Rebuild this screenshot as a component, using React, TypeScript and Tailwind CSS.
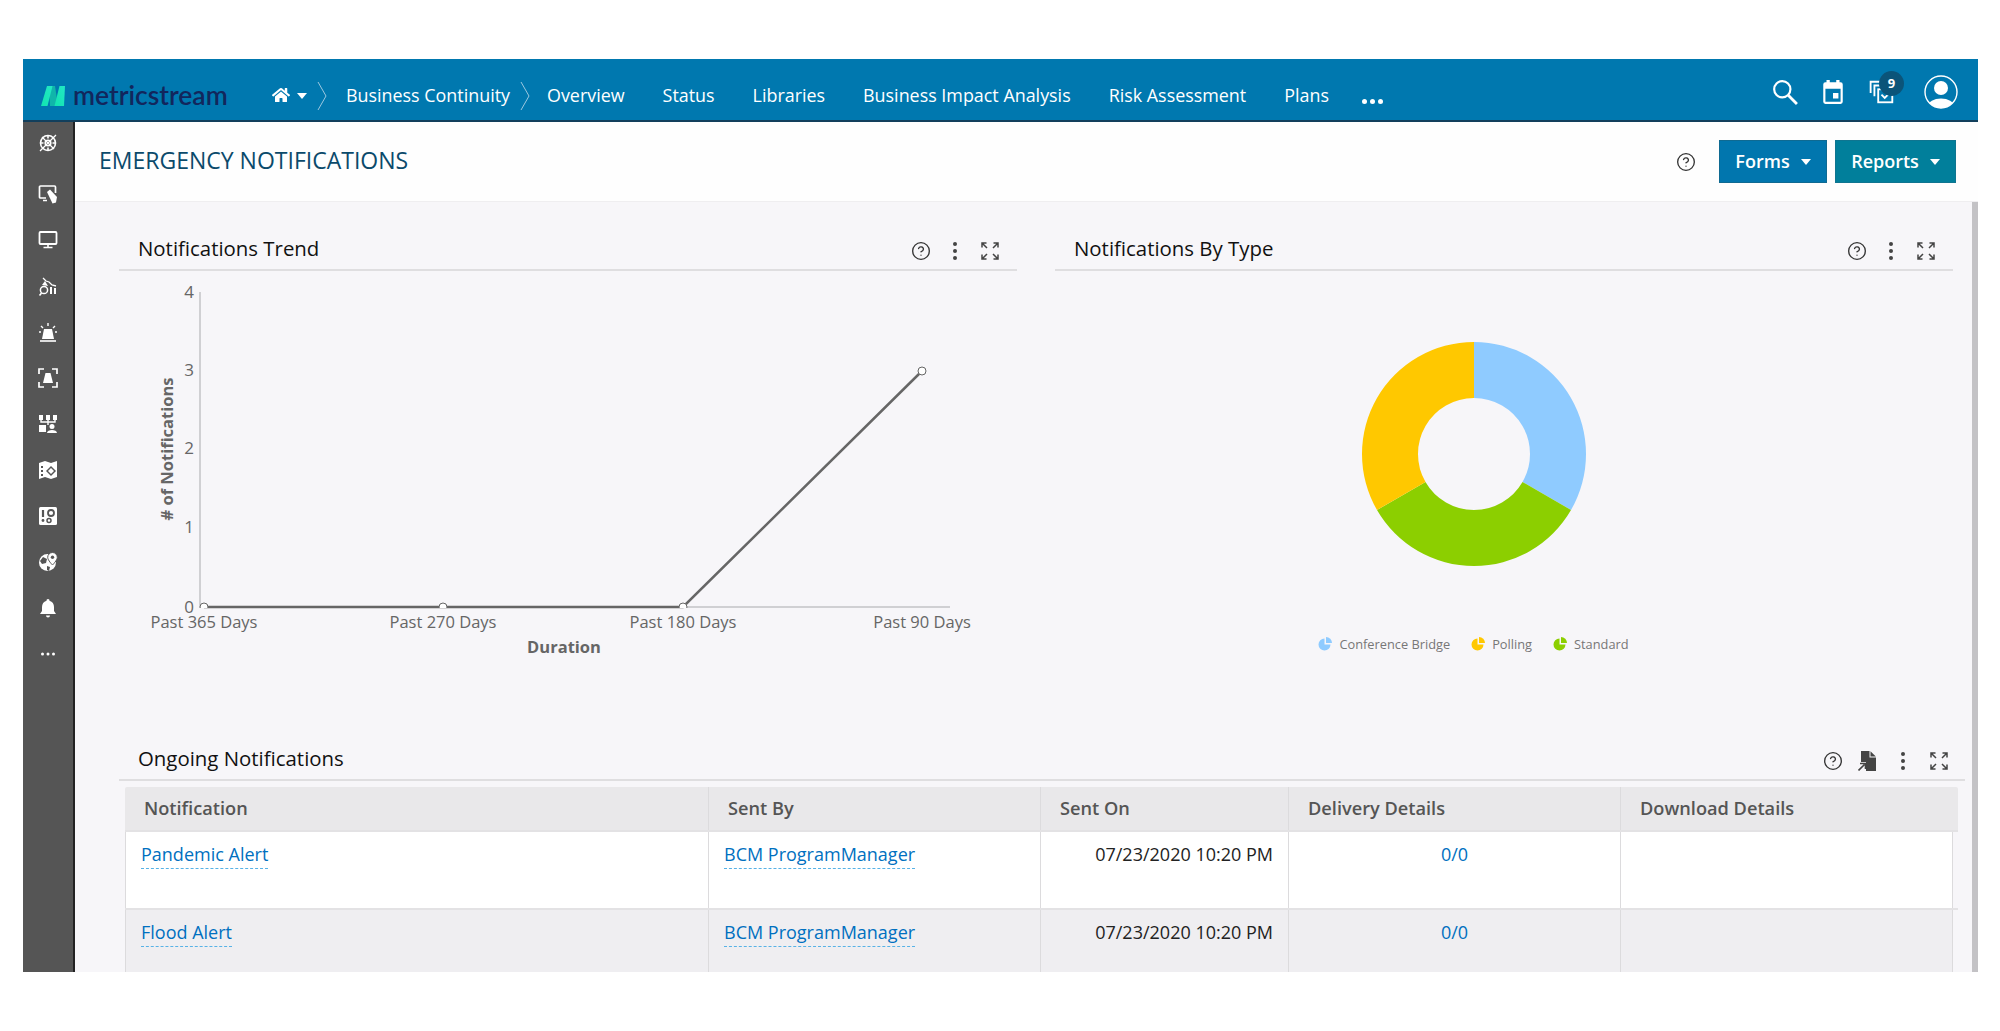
import { FaHome } from "react-icons/fa";
import { CircleHelp } from "lucide-react";

const W = "#ffffff";

function Caret({ className }: { className: string }) {
  return (
    <svg viewBox="0 0 10 6" className={className} fill="currentColor">
      <path d="M0 0h10L5 6z" />
    </svg>
  );
}

function Crumb() {
  return (
    <svg viewBox="0 0 10 30" className="w-[10px] h-[30px] shrink-0" fill="none" stroke="#9cc8e0" strokeWidth="1">
      <path d="M1 1l8 14-8 14" />
    </svg>
  );
}

function Logo() {
  return (
    <div className="flex items-center w-[204px] shrink-0">
      <svg viewBox="0 0 24 20" className="w-[24px] h-[20px] mr-[8px]">
        <defs>
          <linearGradient id="lg" x1="0" y1="1" x2="1" y2="0">
            <stop offset="0" stopColor="#12e3b0" />
            <stop offset="1" stopColor="#22e8c4" />
          </linearGradient>
        </defs>
        <path d="M8 0H14L17 20H9z" fill="#10b5aa" />
        <path d="M0 20L6 0H11.500L6.500 20z" fill="url(#lg)" />
        <path d="M13.500 20L18.500 0H24L23 20z" fill="url(#lg)" />
      </svg>
      <span className="font-['Lato',sans-serif] text-[26.500px] leading-none font-semibold text-[#12265c] -mt-[1px]">metricstream</span>
    </div>
  );
}

const navItems = ["Overview", "Status", "Libraries", "Business Impact Analysis", "Risk Assessment", "Plans"];

function TopBar() {
  return (
    <header className="h-[63px] shrink-0 bg-[#0078af] border-b-2 border-[#123f5c] flex items-center pl-[18px] pr-[20px] pt-[12px]">
      <Logo />
      <div className="ml-[27px] flex items-center text-white">
        <FaHome className="w-[18px] h-[18px] -mt-[2px]" />
        <Caret className="w-[10px] h-[6px] ml-[7px] text-white" />
        <span className="ml-[10px]"><Crumb /></span>
        <span className="ml-[19px] text-[17.900px] leading-none">Business Continuity</span>
        <span className="ml-[10px]"><Crumb /></span>
        <div className="ml-[17px] flex items-center gap-[38px] text-[17.900px] leading-none">
          {navItems.map((n) => (
            <span key={n}>{n}</span>
          ))}
          <span className="flex gap-[3px] mt-[12px] -ml-[5px]">
            <i className="w-[5px] h-[5px] rounded-full bg-white" />
            <i className="w-[5px] h-[5px] rounded-full bg-white" />
            <i className="w-[5px] h-[5px] rounded-full bg-white" />
          </span>
        </div>
      </div>
      <div className="ml-auto flex items-center -mt-[7px]">
        <svg viewBox="0 0 24 24" className="w-[26px] h-[26px] mr-[1px]" fill="none" stroke={W} strokeWidth="2">
          <circle cx="9.500" cy="9.500" r="7.500" />
          <path d="M15 15l8 8" strokeWidth="2.600" />
        </svg>
        <svg viewBox="0 0 24 24" className="w-[26px] h-[26px] ml-[21px]" fill={W}>
          <path d="M19 3h-1V1h-3v2H9V1H6v2H5a2 2 0 00-2 2v16a2 2 0 002 2h14a2 2 0 002-2V5a2 2 0 00-2-2zm0 18H5V9h14v12zm-7-8h5v5h-5z" />
        </svg>
        <div className="relative w-[26px] h-[26px] ml-[23px]">
          <svg viewBox="0 0 24 24" className="w-[26px] h-[26px]" fill="none" stroke={W} strokeWidth="1.700">
            <path d="M1.500 13V2.500H12" />
            <path d="M5 16V6h11" />
            <rect x="8.500" y="9.500" width="13" height="12" fill="#0078af" />
            <path d="M11.500 14.500l3 3 4-4" />
          </svg>
          <span className="absolute -top-[8px] left-[10px] w-[25px] h-[25px] rounded-full bg-[#0b5479] text-white text-[13px] font-bold flex items-center justify-center">9</span>
        </div>
        <svg viewBox="0 0 34 34" className="w-[34px] h-[34px] ml-[29px]">
          <defs>
            <clipPath id="av"><circle cx="17" cy="17" r="16" /></clipPath>
          </defs>
          <circle cx="17" cy="17" r="16" fill="none" stroke={W} strokeWidth="1.400" />
          <circle cx="17" cy="13" r="7" fill={W} />
          <ellipse cx="17" cy="31" rx="13" ry="7.500" fill={W} clipPath="url(#av)" />
        </svg>
      </div>
    </header>
  );
}

const ic = "w-[20px] h-[20px]";
const sideIcons = [
  <svg viewBox="0 0 20 20" className={ic} fill="none" stroke={W} strokeWidth="1.600" key="1">
    <circle cx="10" cy="10" r="7.500" />
    <circle cx="10" cy="10" r="2.800" />
    <path d="M10 2.500v3M10 14.500v3M2.500 10h3M14.500 10h3" />
    <path d="M2 18L18 2M4 4l12 12" strokeWidth="1.300" />
  </svg>,
  <svg viewBox="0 0 20 20" className={ic} key="2">
    <path d="M8 14H2.500a1 1 0 01-1-1V3a1 1 0 011-1h14a1 1 0 011 1v6" fill="none" stroke={W} strokeWidth="1.700" />
    <path d="M5 16.500h4" stroke={W} strokeWidth="1.500" />
    <path d="M9 8l3-2.500 7 7.500-1 5.500-3.500 1z" fill={W} />
  </svg>,
  <svg viewBox="0 0 20 20" className={ic} fill="none" stroke={W} key="3">
    <rect x="1.500" y="2" width="17" height="12" rx="1" strokeWidth="1.800" />
    <path d="M10 14v3M5.500 17.500h9" strokeWidth="1.600" />
  </svg>,
  <svg viewBox="0 0 20 20" className={ic} key="4">
    <circle cx="6" cy="14" r="3.600" fill="none" stroke={W} strokeWidth="1.500" />
    <path d="M1.500 19.500l2-2.500" stroke={W} strokeWidth="1.600" />
    <path d="M5 2l3 3 3 1 3 3 4 1" fill="none" stroke={W} strokeWidth="1.300" />
    <path d="M4 9l3-4 3 5zM12 11h2v7h-2zM16 12h2v6h-2z" fill={W} />
  </svg>,
  <svg viewBox="0 0 20 20" className={ic} key="5">
    <path d="M6 7h8l2 10H4z" fill={W} />
    <path d="M2 19h16" stroke={W} strokeWidth="1.600" />
    <path d="M10 1v3M3 4l2 2M17 4l-2 2M1 10h2M17 10h2" stroke={W} strokeWidth="1.400" />
  </svg>,
  <svg viewBox="0 0 20 20" className={ic} key="6">
    <path d="M1 6V1h5M14 1h5v5M19 14v5h-5M6 19H1v-5" fill="none" stroke={W} strokeWidth="1.700" />
    <path d="M7.500 5h5l2.500 10H5z" fill={W} />
  </svg>,
  <svg viewBox="0 0 20 20" className={ic} fill={W} key="7">
    <path d="M1 1h4v5H1zM8 1h4v5H8zM15 1h4v5h-4z" />
    <path d="M3 6v2h14V6M10 6v5" fill="none" stroke={W} strokeWidth="1.400" />
    <path d="M1 11h7v7H1z" />
    <circle cx="14" cy="12.500" r="2.500" />
    <path d="M9 19c0-4 10-4 10 0z" />
  </svg>,
  <svg viewBox="0 0 20 20" className={ic} key="8">
    <path d="M1 3l6-2 6 2 6-2v16l-6 2-6-2-6 2z" fill={W} />
    <path d="M13 6l5 5-5 5-5-5z" fill="#555555" />
    <path d="M13 8l3 3-3 3-3-3z" fill={W} />
    <path d="M3 6h2v2H3zM3 10h2v2H3zM3 14h2v2H3z" fill="#555555" />
  </svg>,
  <svg viewBox="0 0 20 20" className={ic} key="9">
    <rect x="1" y="1" width="18" height="18" rx="1.500" fill={W} />
    <path d="M5 4v7" stroke="#555555" strokeWidth="2.200" />
    <circle cx="5" cy="14.500" r="1.400" fill="#555555" />
    <circle cx="13" cy="7" r="3" fill="none" stroke="#555555" strokeWidth="1.800" />
    <circle cx="11" cy="14.500" r="2" fill="none" stroke="#555555" strokeWidth="1.500" />
  </svg>,
  <svg viewBox="0 0 20 20" className={ic} key="10">
    <circle cx="9.500" cy="10.500" r="8.500" fill={W} />
    <path d="M5 5l4 2-1 4-4 1-2-3zM9 14l3 1-1 4-2-1z" fill="#555555" />
    <path d="M14.500 0.500a4.800 4.800 0 014.800 4.800c0 3-4.800 7.700-4.800 7.700S9.700 8.300 9.700 5.300A4.800 4.800 0 0114.500 0.500z" fill={W} stroke="#555555" strokeWidth="1" />
    <circle cx="14.500" cy="5.300" r="1.700" fill="#555555" />
  </svg>,
  <svg viewBox="0 0 20 20" className={ic} fill={W} key="11">
    <path d="M10 1a1.500 1.500 0 011.500 1.700C14.500 3.500 16 6 16 9v4l2 3H2l2-3V9c0-3 1.500-5.500 4.500-6.300A1.500 1.500 0 0110 1z" />
    <path d="M8 17.500h4a2 2 0 01-4 0z" />
  </svg>,
  <svg viewBox="0 0 20 20" className={ic} fill={W} key="12">
    <circle cx="4.500" cy="10" r="1.500" />
    <circle cx="10" cy="10" r="1.500" />
    <circle cx="15.500" cy="10" r="1.500" />
  </svg>,
];

function Sidebar() {
  return (
    <aside className="w-[52px] shrink-0 bg-[#555555] border-r-2 border-[#222222] flex flex-col items-center">
      {sideIcons.map((s, i) => (
        <div key={i} className={i === 0 ? "h-[42px] w-full flex items-center justify-center mb-[7px]" : "h-[46px] w-full flex items-center justify-center"}>
          {s}
        </div>
      ))}
    </aside>
  );
}

function Help({ className }: { className?: string }) {
  return <CircleHelp className={className ?? "w-[20px] h-[20px]"} color="#333333" strokeWidth={1.600} />;
}

function Dots() {
  return (
    <svg viewBox="0 0 4 18" className="w-[4px] h-[18px]" fill="#444444">
      <circle cx="2" cy="2" r="2" />
      <circle cx="2" cy="9" r="2" />
      <circle cx="2" cy="16" r="2" />
    </svg>
  );
}

function Expand() {
  return (
    <svg viewBox="0 0 18 18" className="w-[18px] h-[18px]" fill="none" stroke="#444444" strokeWidth="1.500">
      <path d="M1 5.500V1h4.500M1 1l5 5M17 5.500V1h-4.500M17 1l-5 5M1 12.500V17h4.500M1 17l5-5M17 12.500V17h-4.500M17 17l-5-5" />
    </svg>
  );
}

function FileExport() {
  return (
    <svg viewBox="0 0 18 20" className="w-[18px] h-[20px]" fill="#444444">
      <path d="M3 0h8.500v6.500H18V20H7v-7.500H3z" />
      <path d="M12.500 0.300L17.800 5.500H12.500z" />
      <path d="M0 11h8v9H0z" fill="#f7f6f9" />
      <path d="M0.500 19.500l6-6M2 12.500h5.500v5.500" fill="none" stroke="#444444" strokeWidth="1.600" />
    </svg>
  );
}

function PanelHead({ title, extra }: { title: string; extra?: boolean }) {
  return (
    <div className="h-[44px] border-b-2 border-[#dfdee0] flex items-center pl-[19px]">
      <h2 className="text-[20.400px] leading-none font-normal text-[#111111]">{title}</h2>
      <div className="ml-auto flex items-center pt-[6px]">
        <Help />
        {extra && <span className="ml-[15px] flex"><FileExport /></span>}
        <span className={extra ? "ml-[25px] flex" : "ml-[22px] flex"}><Dots /></span>
        <span className={extra ? "ml-[25px] mr-[17px] flex" : "ml-[24px] mr-[18px] flex"}><Expand /></span>
      </div>
    </div>
  );
}

function TrendChart() {
  const ox = 119;
  const oy = 271;
  const X = (x: number) => x - ox;
  const Y = (y: number) => y - oy;
  const pts: [number, number][] = [[204, 607], [443, 607], [683, 607], [922, 371]];
  const xl = ["Past 365 Days", "Past 270 Days", "Past 180 Days", "Past 90 Days"];
  const yt: [string, number][] = [["4", 292], ["3", 370], ["2", 448], ["1", 527], ["0", 607]];
  return (
    <svg width="898" height="420" className="block">
      <defs>
        <clipPath id="plot"><rect x="0" y="0" width="898" height={Y(608)} /></clipPath>
      </defs>
      <path d={`M${X(200)} ${Y(292)}V${Y(607)}H${X(950)}`} fill="none" stroke="#c4c3c6" strokeWidth="1.500" />
      <g fontSize="17" fill="#666666" textAnchor="end">
        {yt.map(([t, y]) => (
          <text key={t} x={X(194)} y={Y(y) + 6}>{t}</text>
        ))}
      </g>
      <polyline points={pts.map(([x, y]) => `${X(x)},${Y(y)}`).join(" ")} fill="none" stroke="#666666" strokeWidth="2.500" />
      <g clipPath="url(#plot)" fill="#ffffff" stroke="#666666" strokeWidth="1">
        {pts.map(([x, y]) => (
          <circle key={x} cx={X(x)} cy={Y(y)} r="4" />
        ))}
      </g>
      <g fontSize="16.500" fill="#666666" textAnchor="middle">
        {pts.map(([x], i) => (
          <text key={x} x={X(x)} y={Y(628)}>{xl[i]}</text>
        ))}
      </g>
      <text x={X(564)} y={Y(653)} fontSize="16.500" fontWeight="700" fill="#666666" textAnchor="middle">Duration</text>
      <text transform={`translate(${X(173)} ${Y(449)}) rotate(-90)`} fontSize="16.500" fontWeight="700" fill="#666666" textAnchor="middle">
        # of Notifications
      </text>
    </svg>
  );
}

function LegendPie({ color }: { color: string }) {
  return (
    <svg viewBox="0 0 14 14" className="w-[14px] h-[14px]" fill={color}>
      <path d="M6.500 1.500A6 6 0 1012.500 7.500H6.500z" />
      <path d="M8 0A6 6 0 0114 6H8z" />
    </svg>
  );
}

function Donut() {
  return (
    <div className="flex flex-col items-center pr-[61px]">
      <svg viewBox="0 0 226 226" className="w-[226px] h-[226px] mt-[70px]">
        <path d="M113 1A112 112 0 0 1 210 169L161.500 141A56 56 0 0 0 113 57Z" fill="#8fcbff" />
        <path d="M210 169A112 112 0 0 1 16 169L64.500 141A56 56 0 0 0 161.500 141Z" fill="#8ccf00" />
        <path d="M16 169A112 112 0 0 1 113 1L113 57A56 56 0 0 0 64.500 141Z" fill="#ffc800" />
      </svg>
      <div className="mt-[70px] flex items-center text-[12.800px] leading-none text-[#777777]">
        <LegendPie color="#8fcbff" />
        <span className="ml-[7px]">Conference Bridge</span>
        <span className="ml-[21px]"><LegendPie color="#ffc800" /></span>
        <span className="ml-[7px]">Polling</span>
        <span className="ml-[21px]"><LegendPie color="#8ccf00" /></span>
        <span className="ml-[7px]">Standard</span>
      </div>
    </div>
  );
}

function LinkText({ children }: { children: string }) {
  return <a className="text-[#0070c0] border-b border-dashed border-[#58b2e6] pb-[2px]">{children}</a>;
}

const headers = ["Notification", "Sent By", "Sent On", "Delivery Details", "Download Details"];
const rows = ["Pandemic Alert", "Flood Alert"];

function NotificationsTable() {
  const grid = "grid grid-cols-[583px_332px_248px_332px_338px]";
  return (
    <div className="ml-[6px] mr-[7px] mt-[6px] text-[18px]">
      <div className={`${grid} h-[43px] bg-[#e9e8ea] rounded-t-[2px] text-[18.200px]`}>
        {headers.map((h, i) => (
          <div key={h} className={i === 0 ? "pl-[19px] flex items-center font-semibold text-[#555555]" : "pl-[19px] flex items-center font-semibold text-[#555555] border-l border-[#dcdbdd]"}>
            {h}
          </div>
        ))}
      </div>
      {rows.map((r, i) => {
        const bg = i === 0 ? "bg-white" : "bg-[#efeef1]";
        return (
          <div key={r} className={`${grid} h-[78px] border-t-2 border-[#e3e2e4] first-of-type:border-t-0`}>
            <div className={`${bg} border-l border-[#dcdbdd] pl-[15px] pt-[9px]`}><LinkText>{r}</LinkText></div>
            <div className={`${bg} border-l border-[#dcdbdd] pl-[15px] pt-[9px]`}><LinkText>BCM ProgramManager</LinkText></div>
            <div className={`${bg} border-l border-[#dcdbdd] pr-[15px] pt-[9px] text-right text-[#222222]`}>07/23/2020 10:20 PM</div>
            <div className={`${bg} border-l border-[#dcdbdd] pt-[9px] text-center text-[#0070c0]`}>0/0</div>
            <div className={`${bg} border-l border-r border-[#dcdbdd] mr-[5px]`} />
          </div>
        );
      })}
    </div>
  );
}

export default function App() {
  return (
    <div className="h-[1031px] w-[2000px] bg-white pt-[59px] overflow-hidden font-['Open_Sans','Noto_Sans',sans-serif]">
      <div className="ml-[23px] w-[1955px] h-[913px] flex flex-col overflow-hidden">
        <TopBar />
        <div className="flex-1 min-h-0 flex">
          <Sidebar />
          <main className="flex-1 min-w-0 flex flex-col">
            <div className="h-[80px] shrink-0 bg-[#fefefe] border-b border-[#efeef0] flex items-center pl-[24px] pr-[22px]">
              <h1 className="text-[23px] leading-none font-normal text-[#0b4a6b] -mt-[2px]">EMERGENCY NOTIFICATIONS</h1>
              <div className="ml-auto flex items-center">
                <Help />
                <button className="ml-[23px] w-[108px] h-[43px] bg-[#0176ae] border border-[#0f6a92] text-white text-[18px] font-semibold flex items-center justify-center">
                  Forms<Caret className="w-[10px] h-[6px] ml-[11px]" />
                </button>
                <button className="ml-[8px] w-[121px] h-[43px] bg-[#017f9b] border border-[#0f7590] text-white text-[18px] font-semibold flex items-center justify-center">
                  Reports<Caret className="w-[10px] h-[6px] ml-[11px]" />
                </button>
              </div>
            </div>
            <div className="flex-1 min-h-0 flex bg-[#f7f6f9]">
              <div className="flex-1 min-w-0 pl-[44px] pr-[7px] pt-[25px] overflow-hidden">
                <div className="grid grid-cols-[898px_898px] gap-x-[38px] h-[510px]">
                  <section>
                    <PanelHead title="Notifications Trend" />
                    <TrendChart />
                  </section>
                  <section>
                    <PanelHead title="Notifications By Type" />
                    <Donut />
                  </section>
                </div>
                <section>
                  <PanelHead title="Ongoing Notifications" extra />
                  <NotificationsTable />
                </section>
              </div>
              <div className="w-[6px] shrink-0 bg-[#c3c2c5]" />
            </div>
          </main>
        </div>
      </div>
    </div>
  );
}
